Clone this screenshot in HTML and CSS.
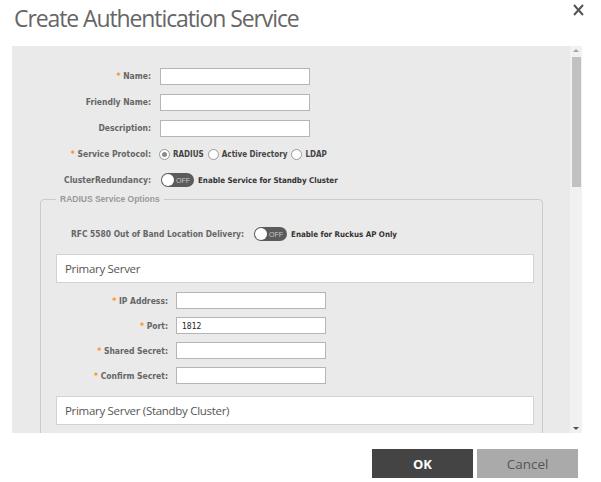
FILE: index.html
```html
<!DOCTYPE html>
<html lang="en">
<head>
    <meta charset="UTF-8">
    <title>Create Authentication Service</title>
    <link rel="stylesheet" href="styles.css">
</head>
<body>
    <div class="dialog">
        <div class="dialog-head">
            <h1 class="dialog-title">Create Authentication Service</h1>
            <span class="close-x">
                <svg width="11" height="12" viewBox="0 0 11 12"><path d="M1 1 L10 11 M10 1 L1 11" stroke="#555" stroke-width="2" fill="none"/></svg>
            </span>
        </div>

        <div class="panel">
            <div class="panel-body">
                <div class="form-row">
                    <label class="req">Name:</label>
                    <input type="text" class="field">
                </div>
                <div class="form-row">
                    <label>Friendly Name:</label>
                    <input type="text" class="field">
                </div>
                <div class="form-row">
                    <label>Description:</label>
                    <input type="text" class="field">
                </div>
                <div class="form-row">
                    <label class="req">Service Protocol:</label>
                    <div class="radios">
                        <span class="radio checked"></span><span class="opt">RADIUS</span>
                        <span class="radio"></span><span class="opt">Active Directory</span>
                        <span class="radio"></span><span class="opt">LDAP</span>
                    </div>
                </div>
                <div class="form-row">
                    <label>ClusterRedundancy:</label>
                    <div class="switch-line">
                        <span class="switch"><span class="knob"></span>OFF</span>
                        <span class="switch-text">Enable Service for Standby Cluster</span>
                    </div>
                </div>

                <fieldset class="group">
                    <legend>RADIUS Service Options</legend>

                    <div class="rfc-row">
                        <label>RFC 5580 Out of Band Location Delivery:</label>
                        <div class="switch-line">
                            <span class="switch"><span class="knob"></span>OFF</span>
                            <span class="switch-text">Enable for Ruckus AP Only</span>
                        </div>
                    </div>

                    <div class="section-head">Primary Server</div>

                    <div class="form-row sub">
                        <label class="req">IP Address:</label>
                        <input type="text" class="field">
                    </div>
                    <div class="form-row sub">
                        <label class="req">Port:</label>
                        <input type="text" class="field" value="1812">
                    </div>
                    <div class="form-row sub">
                        <label class="req">Shared Secret:</label>
                        <input type="text" class="field">
                    </div>
                    <div class="form-row sub">
                        <label class="req">Confirm Secret:</label>
                        <input type="text" class="field">
                    </div>

                    <div class="section-head standby">Primary Server (Standby Cluster)</div>
                </fieldset>
            </div>

            <div class="scrollbar">
                <span class="arrow up"></span>
                <span class="thumb"></span>
                <span class="track-rest"></span>
                <span class="arrow down"></span>
            </div>
        </div>

        <div class="dialog-foot">
            <button class="btn btn-ok">OK</button>
            <button class="btn btn-cancel">Cancel</button>
        </div>
    </div>
</body>
</html>
```

FILE: styles.css
```css
body {
    margin: 0;
    background: #fff;
    font-family: "DejaVu Sans Condensed", "DejaVu Sans", sans-serif;
}
.dialog {
    width: 601px;
    height: 482px;
}
.dialog-head {
    height: 46px;
    display: flex;
    justify-content: space-between;
    align-items: flex-start;
}
.dialog-title {
    margin: 3px 0 0 14px;
    font-family: "Open Sans", sans-serif;
    font-weight: normal;
    font-size: 23px;
    letter-spacing: -1.1px;
    line-height: 30px;
    color: #666;
}
.close-x {
    margin: 4px 17px 0 0;
    line-height: 0;
}

/* scrolling grey area */
.panel {
    margin-left: 12px;
    width: 570px;
    height: 387px;
    display: flex;
    background: #eaeaea;
}
.panel-body {
    flex: 1;
    overflow: hidden;
    padding-top: 17px;
}
.scrollbar {
    width: 12px;
    background: #f1f1f1;
    display: flex;
    flex-direction: column;
    align-items: center;
}
.arrow {
    height: 11px;
    width: 12px;
    position: relative;
}
.arrow.up::after,
.arrow.down::after {
    content: "";
    position: absolute;
    left: 3px;
    border-left: 3px solid transparent;
    border-right: 3px solid transparent;
}
.arrow.up::after {
    top: 3px;
    border-bottom: 3px solid #a3a3a3;
}
.arrow.down::after {
    bottom: 3px;
    border-top: 3px solid #505050;
}
.thumb {
    width: 9px;
    height: 130px;
    background: #c1c1c1;
}
.track-rest {
    flex: 1;
}

/* rows */
.form-row {
    height: 26px;
    display: flex;
    align-items: center;
}
.form-row label {
    width: 139px;
    margin-right: 9px;
    text-align: right;
    font-size: 8.5px;
    font-weight: bold;
    color: #666;
}
.req::before {
    content: "* ";
    color: #f7931d;
}
.field {
    box-sizing: border-box;
    width: 150px;
    height: 17px;
    margin: 0;
    padding: 0 5px;
    border: 1px solid #b5b5b5;
    background: #fff;
    font-family: "DejaVu Sans Condensed", sans-serif;
    font-size: 8.5px;
    color: #222;
    outline: none;
}

.radios {
    display: flex;
    align-items: center;
    margin-left: -1px;
}
.radio {
    box-sizing: border-box;
    width: 11px;
    height: 11px;
    border: 1px solid #999;
    border-radius: 50%;
    background: #fff;
    position: relative;
}
.radio.checked::after {
    content: "";
    position: absolute;
    left: 2px;
    top: 2px;
    width: 5px;
    height: 5px;
    border-radius: 50%;
    background: #8c8c8c;
}
.opt {
    margin: 0 4px 0 3px;
    font-size: 8px;
    font-weight: bold;
    color: #444;
}

.switch-line {
    display: flex;
    align-items: center;
}
.switch {
    box-sizing: border-box;
    width: 33px;
    height: 14px;
    border-radius: 7px;
    background: #5b5b5b;
    display: flex;
    align-items: center;
    padding: 0 4px 0 1px;
    justify-content: space-between;
    font-family: "Liberation Sans", sans-serif;
    font-size: 7px;
    color: #c8c8c8;
    margin-left: 1px;
}
.knob {
    width: 12px;
    height: 12px;
    border-radius: 50%;
    background: #fff;
}
.switch-text {
    margin-left: 4px;
    font-size: 7.9px;
    font-weight: bold;
    color: #333;
}

/* RADIUS options group */
.group {
    margin: 0 27px 0 28px;
    padding: 0 8px 20px 15px;
    border: 1px solid #cbcbcb;
    border-radius: 4px 4px 0 0;
}
.group legend {
    margin-left: 0;
    padding: 0 4px;
    font-family: "Liberation Sans", sans-serif;
    font-size: 8.5px;
    font-weight: bold;
    line-height: 12px;
    color: #999;
}
.rfc-row {
    height: 26px;
    margin-top: 16px;
    padding-left: 15px;
    display: flex;
    align-items: center;
}
.rfc-row label {
    margin-right: 9px;
    font-size: 8.4px;
    font-weight: bold;
    color: #666;
}
.section-head {
    box-sizing: border-box;
    height: 29px;
    margin-top: 7px;
    padding-left: 8px;
    display: flex;
    align-items: center;
    background: #fff;
    border: 1px solid #d2d2d2;
    font-family: "Open Sans", sans-serif;
    font-size: 11.5px;
    letter-spacing: -0.3px;
    color: #555;
}
.section-head.standby {
    margin-top: 8px;
}
.form-row.sub {
    height: 25px;
}
.section-head + .form-row.sub {
    margin-top: 5px;
}
.form-row.sub label {
    width: 112px;
    margin-right: 8px;
}

/* footer buttons */
.dialog-foot {
    display: flex;
    justify-content: flex-end;
    gap: 4px;
    padding: 16px 23px 0 0;
}
.btn {
    width: 101px;
    height: 29px;
    border: none;
    border-radius: 0;
    font-family: "Open Sans", sans-serif;
    font-size: 13.5px;
    cursor: pointer;
}
.btn-ok {
    background: #444;
    color: #fff;
    font-weight: bold;
    font-size: 13px;
}
.btn-cancel {
    background: #aaa;
    color: #555;
}
```
